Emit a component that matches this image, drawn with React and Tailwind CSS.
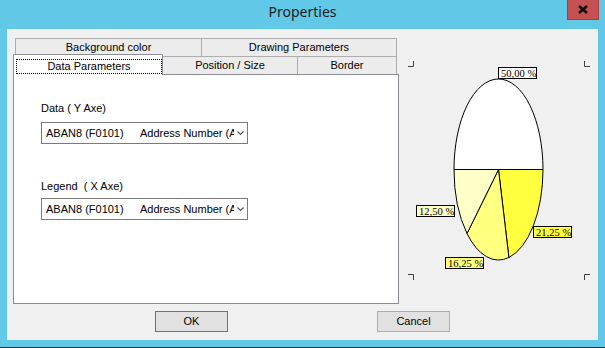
import React from 'react';

const Tab = ({ label, className = '' }) => (
  <div className={`flex items-center justify-center bg-[#ececec] border-[#adadad] text-[11px] text-black ${className}`}>
    {label}
  </div>
);

const Combo = () => (
  <div className="relative flex items-center w-[207px] h-[22px] border border-[#7a7a7a] bg-white text-[11px] text-black">
    <span className="pl-[4px] w-[98px] shrink-0 whitespace-nowrap">ABAN8 (F0101)</span>
    <span className="w-[94px] overflow-hidden whitespace-nowrap">Address Number (AN8)</span>
    <svg className="ml-[3px]" width="7" height="5" viewBox="0 0 7 5">
      <polyline points="0.5,0.5 3.5,3.5 6.5,0.5" fill="none" stroke="#555" strokeWidth="1.2" />
    </svg>
  </div>
);

const PieChart = () => {
  const c = '498.5 169.5';
  const arc = 'A44.5 90.5 0 0 1';
  const labels = [
    { t: '50,00 %', x: 498.5, y: 67.5, fill: '#ffffff' },
    { t: '12,50 %', x: 416.5, y: 205.5, fill: '#ffffc8' },
    { t: '21,25 %', x: 533.5, y: 226.5, fill: '#ffff40' },
    { t: '16,25 %', x: 445.5, y: 257.5, fill: '#ffff80' },
  ];
  return (
    <svg className="ml-[1px] mt-[14px] shrink-0" width="192" height="230" viewBox="400 52 192 230">
      <g fill="none" stroke="#404040" strokeWidth="1">
        <polyline points="408,66.5 413.5,66.5 413.5,61" />
        <polyline points="584.5,61 584.5,66.5 590,66.5" />
        <polyline points="408,274.5 413.5,274.5 413.5,280" />
        <polyline points="590,274.5 584.5,274.5 584.5,280" />
      </g>
      <g stroke="#000" strokeWidth="1">
        <path d={`M${c} L454 169.5 ${arc} 543 169.5 Z`} fill="#ffffff" />
        <path d={`M${c} L543 169.5 ${arc} 508.89 257.5 Z`} fill="#ffff40" />
        <path d={`M${c} L508.89 257.5 ${arc} 467.03 233.49 Z`} fill="#ffff80" />
        <path d={`M${c} L467.03 233.49 ${arc} 454 169.5 Z`} fill="#ffffc8" />
      </g>
      {labels.map((l) => (
        <g key={l.t}>
          <rect x={l.x} y={l.y} width="38" height="11" fill={l.fill} stroke="#000" strokeWidth="1" />
          <text x={l.x + 2.5} y={l.y + 9.2} fontSize="10.6" fontFamily="'Liberation Serif', serif" fill="#000">
            {l.t}
          </text>
        </g>
      ))}
    </svg>
  );
};

export default function App() {
  return (
    <div className="w-[605px] h-[348px] bg-[#62c8e8] flex flex-col font-['Liberation_Sans',Arial,sans-serif]">
      {/* title bar */}
      <div className="relative h-[29px] shrink-0 flex justify-center pt-[2px]">
        <span className="font-['Noto_Sans',sans-serif] text-[14px] leading-[19px] text-[#1b1b1b]">Properties</span>
        <div className="absolute top-0 right-[6px] w-[32px] h-[20px] bg-[#c75050] border border-[#a83d3d] border-t-0 flex items-center justify-center">
          <svg width="10" height="9" viewBox="0 0 10 9">
            <path d="M1 1 L9 8 M9 1 L1 8" stroke="#111" strokeWidth="2.6" />
          </svg>
        </div>
      </div>

      {/* client area */}
      <div className="ml-[7px] w-[591px] h-[311px] shrink-0 bg-[#f0f0f0] flex flex-col">
        <div className="flex pl-[6px] pt-[9px]">
          <div className="flex flex-col w-[386px] shrink-0">
            <div className="flex h-[18px] pl-[2px]">
              <Tab label="Background color" className="w-[186px] border-t border-l" />
              <Tab label="Drawing Parameters" className="w-[196px] border-t border-l border-r" />
            </div>
            <div className="flex h-[18px]">
              <div className="relative z-10 w-[150px] h-[21px] -mt-[2px] bg-white border-t border-l border-r border-[#898c95] pt-[4px] pl-[2px]">
                <div className="h-[15px] border border-dotted border-black flex items-center justify-center text-[11px] text-black">
                  Data Parameters
                </div>
              </div>
              <Tab label="Position / Size" className="w-[135px] border-t border-r" />
              <Tab label="Border" className="w-[99px] border-t border-r" />
            </div>
            <div className="h-[230px] border border-[#898c95] bg-white pl-[27px] pt-[27px] text-[11px] text-black">
              <div className="leading-[13px]">Data ( Y Axe)</div>
              <div className="mt-[7px]">
                <Combo />
              </div>
              <div className="leading-[13px] mt-[36px] whitespace-pre">Legend  ( X Axe)</div>
              <div className="mt-[5px]">
                <Combo />
              </div>
            </div>
          </div>
          <PieChart />
        </div>

        <div className="flex pl-[148px] gap-[149px] mt-[7px]">
          <button className="w-[73px] h-[21px] bg-[#e1e1e1] border border-[#3c7fb1] text-[11px] text-black">OK</button>
          <button className="w-[73px] h-[21px] bg-[#e1e1e1] border border-[#adadad] text-[11px] text-black">Cancel</button>
        </div>
      </div>

      <div className="h-[7px] shrink-0" />
      <div className="h-[1px] shrink-0 bg-[#2d2d2d]" />
    </div>
  );
}
